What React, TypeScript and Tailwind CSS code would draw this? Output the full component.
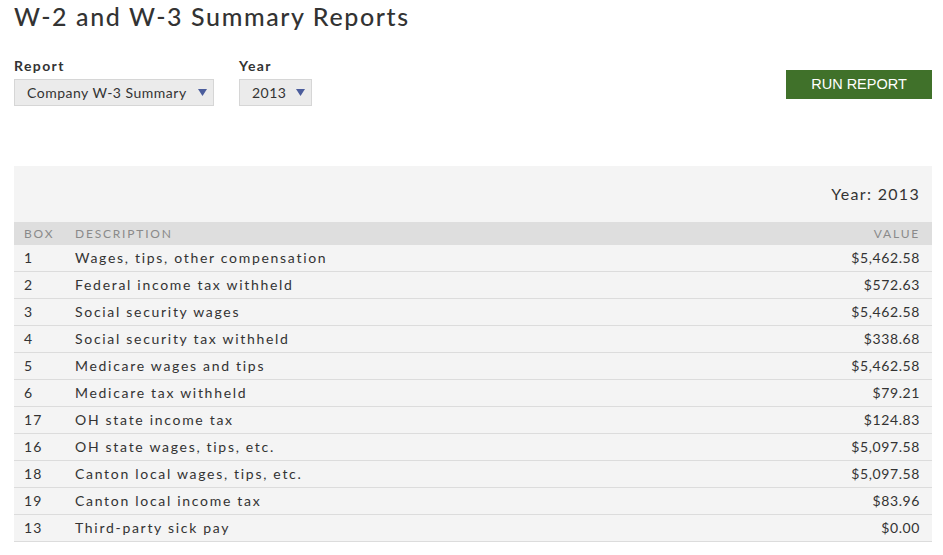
import React from 'react';

const rows = [
  { box: '1', desc: 'Wages, tips, other compensation', value: '$5,462.58' },
  { box: '2', desc: 'Federal income tax withheld', value: '$572.63' },
  { box: '3', desc: 'Social security wages', value: '$5,462.58' },
  { box: '4', desc: 'Social security tax withheld', value: '$338.68' },
  { box: '5', desc: 'Medicare wages and tips', value: '$5,462.58' },
  { box: '6', desc: 'Medicare tax withheld', value: '$79.21' },
  { box: '17', desc: 'OH state income tax', value: '$124.83' },
  { box: '16', desc: 'OH state wages, tips, etc.', value: '$5,097.58' },
  { box: '18', desc: 'Canton local wages, tips, etc.', value: '$5,097.58' },
  { box: '19', desc: 'Canton local income tax', value: '$83.96' },
  { box: '13', desc: 'Third-party sick pay', value: '$0.00' },
];

function Caret() {
  return (
    <svg width="9" height="7" viewBox="0 0 9 7" className="ml-auto">
      <path d="M0 0h9L4.5 7z" fill="#4b5d9c" />
    </svg>
  );
}

function Select({ value, width }: { value: string; width: string }) {
  return (
    <div className={`flex items-center h-[27px] ${width} bg-[#ebebeb] border border-[#d6d6d6] pl-[12px] pr-[6px] pb-[1px] text-[14px] tracking-[0.5px] text-[#333]`}>
      <span>{value}</span>
      <Caret />
    </div>
  );
}

export default function App() {
  return (
    <div className="w-[943px] h-[555px] bg-white pl-[14px] pr-[11px] pt-[1px] text-[#333]" style={{ fontFamily: 'Lato, "Open Sans", sans-serif' }}>
      <h1 className="text-[25px] leading-[30px] font-medium tracking-[1.6px] text-[#333]">W-2 and W-3 Summary Reports</h1>

      <div className="flex items-start mt-[25px]">
        <div className="flex flex-col">
          <label className="text-[14px] leading-[20px] font-bold tracking-[1.4px] text-[#333] mb-[3px]">Report</label>
          <Select value="Company W-3 Summary" width="w-[200px]" />
        </div>
        <div className="flex flex-col ml-[25px]">
          <label className="text-[14px] leading-[20px] font-bold tracking-[1.4px] text-[#333] mb-[3px]">Year</label>
          <Select value="2013" width="w-[73px]" />
        </div>
        <button
          className="ml-auto mt-[14px] w-[146px] h-[29px] bg-[#40712a] text-white text-[14.5px]"
          style={{ fontFamily: '"Liberation Sans", Arial, sans-serif' }}
        >
          RUN REPORT
        </button>
      </div>

      <div className="mt-[60px] bg-[#f4f4f4]">
        <div className="h-[56px] flex items-center justify-end pr-[12px] text-[16px] tracking-[1.3px] text-[#333]">
          Year: 2013
        </div>
        <div className="grid grid-cols-[51px_1fr_auto] h-[23px] items-center bg-[#dedede] pl-[10px] pr-[12px] text-[12px] tracking-[1.8px] text-[#8a8a8a]">
          <span>BOX</span>
          <span>DESCRIPTION</span>
          <span>VALUE</span>
        </div>
        {rows.map((r) => (
          <div
            key={r.box + r.desc}
            className="grid grid-cols-[51px_1fr_auto] h-[27px] items-center border-b border-[#dcdcdc] pl-[10px] pr-[12px] pb-[2px] text-[14px] text-[#333]"
          >
            <span className="tracking-[1.1px]">{r.box}</span>
            <span className="tracking-[1.7px]">{r.desc}</span>
            <span className="tracking-[0.6px]">{r.value}</span>
          </div>
        ))}
      </div>
    </div>
  );
}
